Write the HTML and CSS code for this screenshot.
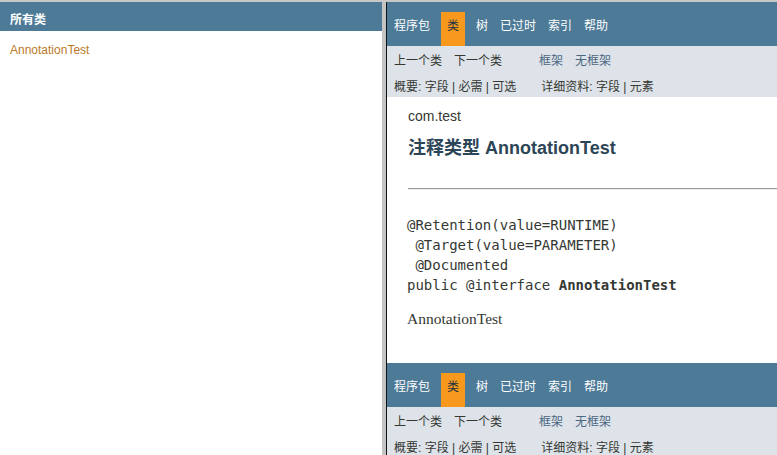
FILE: index.html
```html
<!DOCTYPE html>
<html lang="zh-CN">
<head>
<meta charset="utf-8">
<title>AnnotationTest</title>
<link rel="stylesheet" href="styles.css">
</head>
<body>
<div class="frameset">
  <div class="left-frame">
    <h1 class="bar">所有类</h1>
    <ul class="index-list">
      <li><a href="#">AnnotationTest</a></li>
    </ul>
  </div>
  <div class="divider"></div>
  <div class="right-frame">
    <div class="top-nav">
      <ul class="nav-list">
        <li>程序包</li>
        <li class="current">类</li>
        <li>树</li>
        <li>已过时</li>
        <li>索引</li>
        <li>帮助</li>
      </ul>
    </div>
    <div class="sub-nav">
      <div class="sub-row">
        <ul class="nav-list">
          <li>上一个类</li>
          <li>下一个类</li>
        </ul>
        <ul class="nav-list">
          <li><a class="link" href="#">框架</a></li>
          <li><a class="link" href="#">无框架</a></li>
        </ul>
      </div>
      <div class="sub-row sub-row2">
        <ul class="sub-list">
          <li>概要:&nbsp;</li>
          <li>字段&nbsp;|&nbsp;</li>
          <li><a class="plain" href="#">必需</a>&nbsp;|&nbsp;</li>
          <li>可选</li>
        </ul>
        <ul class="sub-list">
          <li>详细资料:&nbsp;</li>
          <li>字段&nbsp;|&nbsp;</li>
          <li><a class="plain" href="#">元素</a></li>
        </ul>
      </div>
    </div>

    <div class="header">
      <div class="sub-title">com.test</div>
      <h2 class="title">注释类型 AnnotationTest</h2>
    </div>
    <div class="content">
      <hr>
<pre>@Retention(value=RUNTIME)
 @Target(value=PARAMETER)
 @Documented
public @interface <b>AnnotationTest</b></pre>
      <div class="block">AnnotationTest</div>
    </div>

    <div class="bottom">
      <div class="top-nav">
        <ul class="nav-list">
          <li>程序包</li>
          <li class="current">类</li>
          <li>树</li>
          <li>已过时</li>
          <li>索引</li>
          <li>帮助</li>
        </ul>
      </div>
      <div class="sub-nav">
        <div class="sub-row">
          <ul class="nav-list">
            <li>上一个类</li>
            <li>下一个类</li>
          </ul>
          <ul class="nav-list">
            <li><a class="link" href="#">框架</a></li>
            <li><a class="link" href="#">无框架</a></li>
          </ul>
        </div>
        <div class="sub-row sub-row2">
          <ul class="sub-list">
            <li>概要:&nbsp;</li>
            <li>字段&nbsp;|&nbsp;</li>
            <li><a class="plain" href="#">必需</a>&nbsp;|&nbsp;</li>
            <li>可选</li>
          </ul>
          <ul class="sub-list">
            <li>详细资料:&nbsp;</li>
            <li>字段&nbsp;|&nbsp;</li>
            <li><a class="plain" href="#">元素</a></li>
          </ul>
        </div>
      </div>
    </div>
  </div>
</div>
</body>
</html>
```

FILE: styles.css
```css
* { box-sizing: border-box; }
html, body { margin: 0; padding: 0; }
body {
  width: 777px;
  height: 455px;
  overflow: hidden;
  background: #fff;
  color: #353833;
  font-family: "Liberation Sans", "Noto Sans CJK SC", sans-serif;
  font-size: 14px;
}
.frameset {
  display: flex;
  height: 455px;
  border-top: 2px solid #c8c8c8;
}
.left-frame { width: 382px; flex: none; background: #fff; }
.divider {
  width: 5px;
  flex: none;
  background: #c4c4c4;
  border-right: 1px solid #111;
}
.right-frame { flex: 1; min-width: 0; overflow: hidden; background: #fff; }

.bar {
  margin: 0;
  background: #4d7a97;
  color: #fff;
  font-size: 12px;
  font-weight: bold;
  line-height: 16px;
  padding: 10px 6px 3px 10px;
}
.index-list {
  list-style: none;
  margin: 11px 10px 10px;
  padding: 0;
  font-size: 12px;
  line-height: 16px;
}
.index-list a { color: #bb7a2a; text-decoration: none; }

.top-nav {
  background: #4d7a97;
  height: 44px;
  padding: 10px 0 0 1px;
  display: flex;
  font-size: 12px;
  line-height: 16px;
}
.nav-list {
  display: flex;
  list-style: none;
  margin: 0 25px 0 0;
  padding: 0;
}
.nav-list li { padding: 5px 6px; white-space: nowrap; }
.top-nav li { color: #fff; padding: 6px 6px 4px; }
.top-nav .current { background: #f8981d; color: #253441; margin: 0 5px; }

.sub-nav {
  background: #dee3e9;
  font-size: 12px;
  line-height: 16px;
  padding-left: 1px;
}
.sub-row { display: flex; }
.sub-row .nav-list li { padding: 7px 6px 3px; }
.sub-row2 { padding: 7px 0 2px 6px; }
.sub-list {
  display: flex;
  list-style: none;
  margin: 0 25px 0 0;
  padding: 0;
  white-space: nowrap;
}
a.link { color: #4a6782; text-decoration: none; }
a.plain { color: #353833; text-decoration: none; }

.header { padding: 6px 20px 0 21px; }
.sub-title { margin: 5px 0 0; font-size: 14px; line-height: 17px; }
.title {
  margin: 11px 0 0;
  font-size: 18px;
  line-height: 24px;
  color: #2c4557;
  font-weight: bold;
}
.content { padding: 28px 0 0 21px; }
.content hr {
  margin: 0;
  height: 0;
  border: 0;
  border-top: 1px solid #9a9a9a;
  border-bottom: 1px solid #eee;
}
.content pre {
  margin: 25px 0 0 -1px;
  font-family: "DejaVu Sans Mono", monospace;
  font-size: 14px;
  line-height: 20px;
  color: #353833;
}
.block {
  margin: 15px 0 0 -1px;
  font-family: "Liberation Serif", serif;
  font-size: 15.5px;
  line-height: 18px;
}
.bottom { margin-top: 35px; }
```
